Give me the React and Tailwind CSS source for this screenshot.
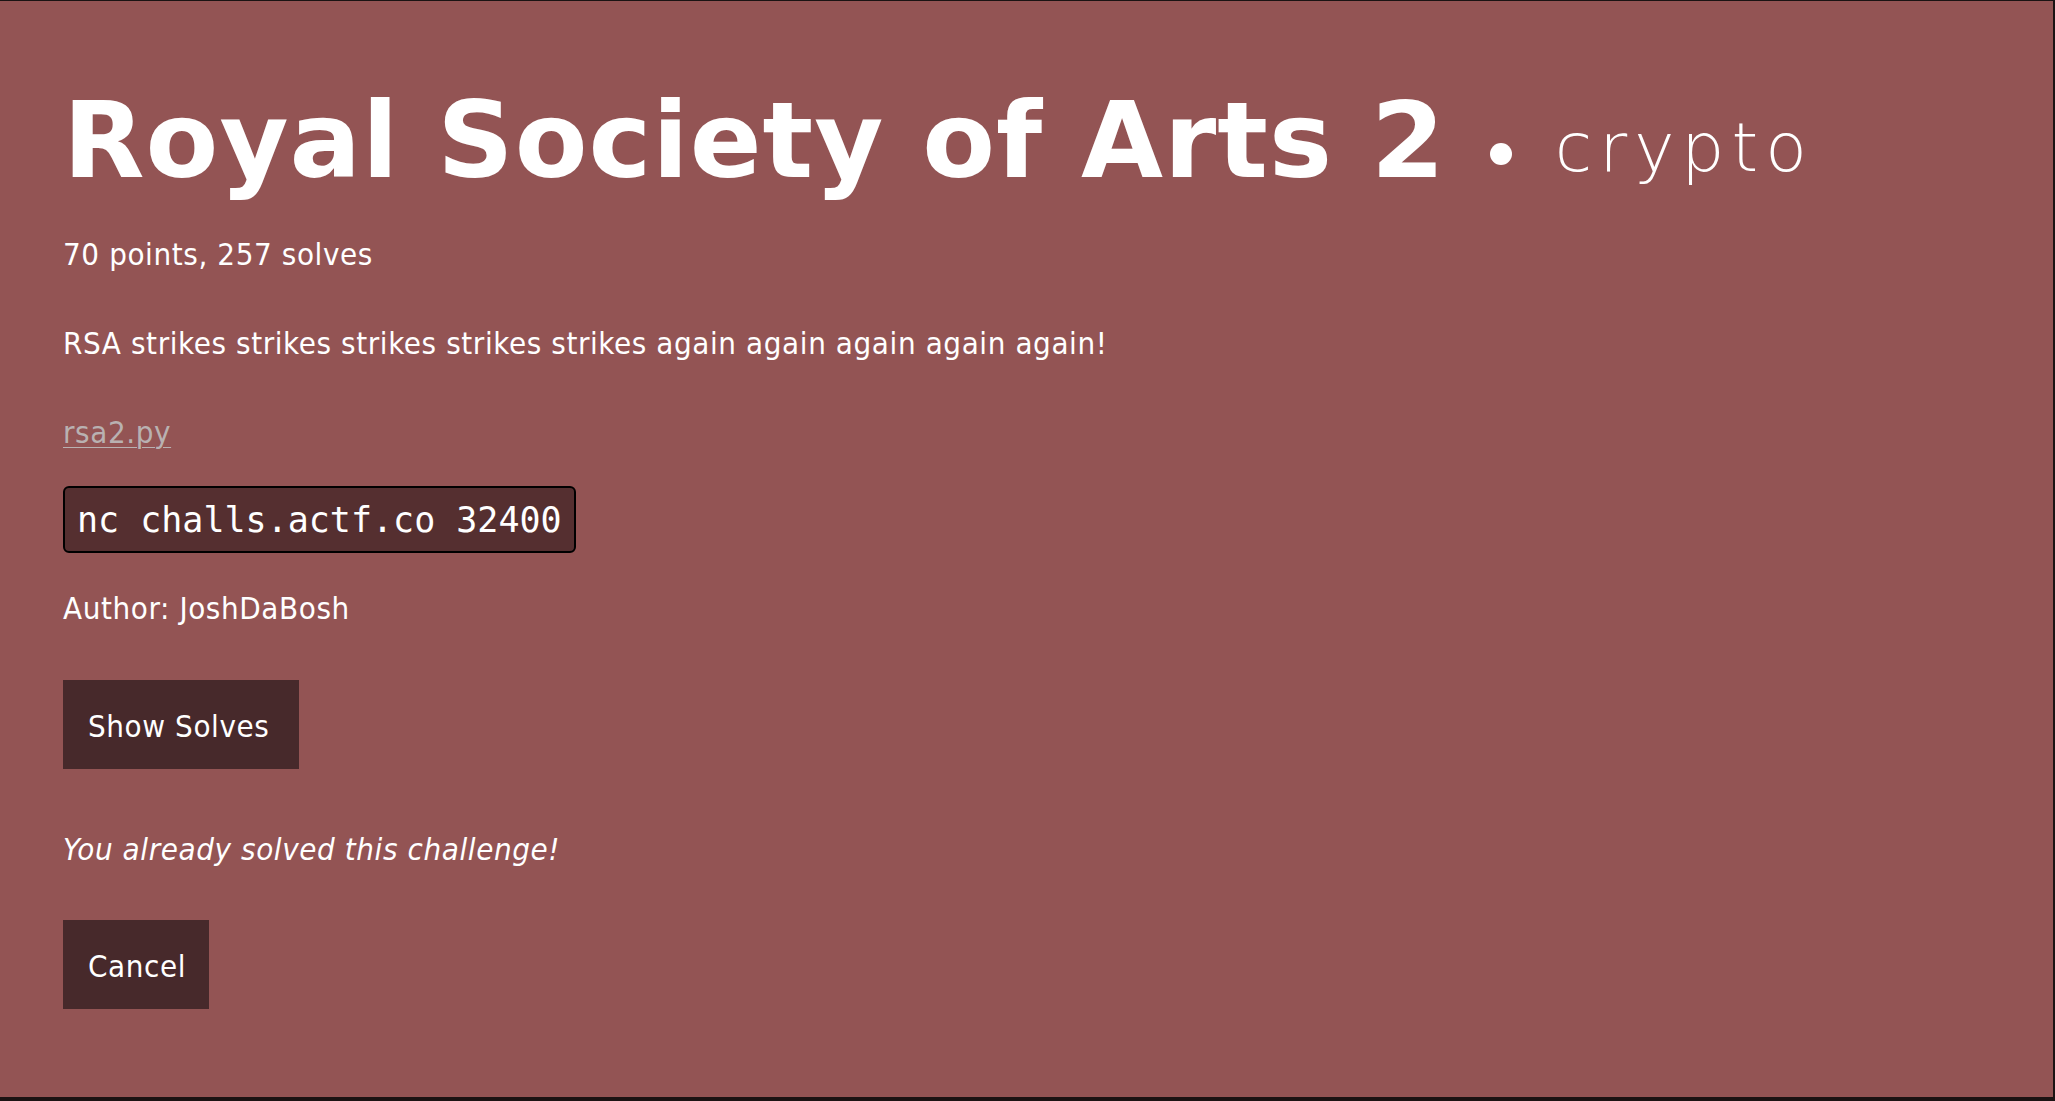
export default function App() {
  const body = "font-['DejaVu_Sans_Condensed','DejaVu_Sans',sans-serif] text-[31px] leading-[46px] tracking-[0.6px]";
  return (
    <div className="h-screen w-full bg-[#1b1313] pt-[1px] pr-[2px] pb-[4px]">
      <div className={`h-full w-full bg-[#935454] text-white pl-[63px] pt-[87px] ${body}`}>
        <h1 className="flex items-baseline whitespace-nowrap">
          <span className="font-['DejaVu_Sans',sans-serif] font-bold text-[106px] leading-[106px] tracking-[1px]">
            Royal Society of Arts 2
          </span>
          <span className="ml-[44px] relative -top-[12px] inline-block w-[22px] h-[22px] rounded-full bg-white" />
          <span className="ml-[43px] relative -top-[6px] font-['DejaVu_Sans',sans-serif] font-extralight text-[68px] leading-[68px] tracking-[7px]">
            crypto
          </span>
        </h1>
        <p className="mt-[37px]">70 points, 257 solves</p>
        <p className="mt-[43px]">RSA strikes strikes strikes strikes strikes again again again again again!</p>
        <p className="mt-[43px]">
          <a href="#" className="text-[#b9b1b1] underline underline-offset-[4px] decoration-1">rsa2.py</a>
        </p>
        <div className="mt-[31px] inline-block bg-[#552f30] border-2 border-black rounded-[6px] px-[12px] pt-[12px] pb-[10px] font-['DejaVu_Sans_Mono',monospace] text-[35px] leading-[41px] tracking-normal whitespace-nowrap">
          nc challs.actf.co 32400
        </div>
        <p className="mt-[32px]">Author: JoshDaBosh</p>
        <div className="mt-[49px]">
          <button className="block w-[236px] h-[89px] bg-[#47292b] text-left pl-[25px] pt-[23px] pb-[20px] text-white">
            Show Solves
          </button>
        </div>
        <p className="mt-[57px] italic">You already solved this challenge!</p>
        <div className="mt-[48px]">
          <button className="block w-[146px] h-[89px] bg-[#47292b] text-left pl-[25px] pt-[23px] pb-[20px] text-white">
            Cancel
          </button>
        </div>
      </div>
    </div>
  );
}
